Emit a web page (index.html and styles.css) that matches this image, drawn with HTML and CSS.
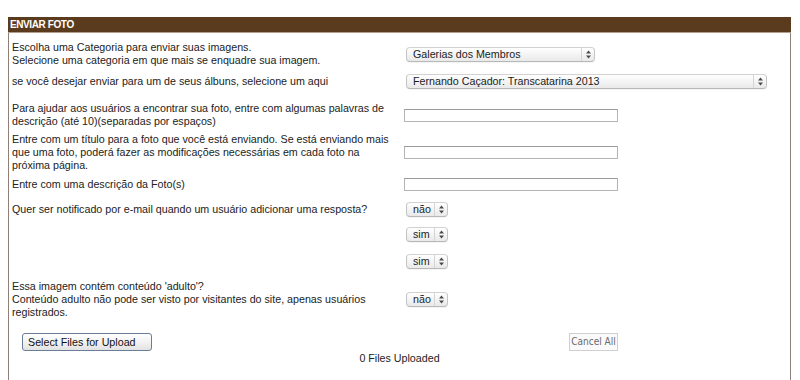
FILE: index.html
```html
<!DOCTYPE html>
<html lang="pt-BR">
<head>
<meta charset="utf-8">
<title>Enviar Foto</title>
<link rel="stylesheet" href="styles.css">
</head>
<body>
<div class="panel">
  <div class="panel-title">ENVIAR FOTO</div>
  <div class="form">
    <div class="row pt8">
      <div class="label">Escolha uma Categoria para enviar suas imagens.<br>Selecione uma categoria em que mais se enquadre sua imagem.</div>
      <div class="field">
        <span class="select select-cat"><span class="select-text">Galerias dos Membros</span><span class="select-arrows"><svg width="5" height="9" viewBox="0 0 5 9"><path d="M0 3.6 L2.5 0.6 L5 3.6 Z M0 5.4 L2.5 8.4 L5 5.4 Z" fill="#4a4a4a"/></svg></span></span>
      </div>
    </div>
    <div class="row pt7">
      <div class="label">se você desejar enviar para um de seus álbuns, selecione um aqui</div>
      <div class="field">
        <span class="select select-album"><span class="select-text">Fernando Caçador: Transcatarina 2013</span><span class="select-arrows"><svg width="5" height="9" viewBox="0 0 5 9"><path d="M0 3.6 L2.5 0.6 L5 3.6 Z M0 5.4 L2.5 8.4 L5 5.4 Z" fill="#4a4a4a"/></svg></span></span>
      </div>
    </div>
    <div class="row pt13">
      <div class="label">Para ajudar aos usuários a encontrar sua foto, entre com algumas palavras de descrição (até 10)(separadas por espaços)</div>
      <div class="field"><span class="text-input"></span></div>
    </div>
    <div class="row pt5">
      <div class="label">Entre com um título para a foto que você está enviando. Se está enviando mais que uma foto, poderá fazer as modificações necessárias em cada foto na próxima página.</div>
      <div class="field"><span class="text-input"></span></div>
    </div>
    <div class="row pt6">
      <div class="label">Entre com uma descrição da Foto(s)</div>
      <div class="field"><span class="text-input"></span></div>
    </div>
    <div class="row pt11">
      <div class="label">Quer ser notificado por e-mail quando um usuário adicionar uma resposta?</div>
      <div class="field">
        <span class="select select-yn"><span class="select-text">não</span><span class="select-arrows"><svg width="5" height="9" viewBox="0 0 5 9"><path d="M0 3.6 L2.5 0.6 L5 3.6 Z M0 5.4 L2.5 8.4 L5 5.4 Z" fill="#4a4a4a"/></svg></span></span>
      </div>
    </div>
    <div class="row pt10">
      <div class="label"></div>
      <div class="field">
        <span class="select select-yn"><span class="select-text">sim</span><span class="select-arrows"><svg width="5" height="9" viewBox="0 0 5 9"><path d="M0 3.6 L2.5 0.6 L5 3.6 Z M0 5.4 L2.5 8.4 L5 5.4 Z" fill="#4a4a4a"/></svg></span></span>
      </div>
    </div>
    <div class="row pt12">
      <div class="label"></div>
      <div class="field">
        <span class="select select-yn"><span class="select-text">sim</span><span class="select-arrows"><svg width="5" height="9" viewBox="0 0 5 9"><path d="M0 3.6 L2.5 0.6 L5 3.6 Z M0 5.4 L2.5 8.4 L5 5.4 Z" fill="#4a4a4a"/></svg></span></span>
      </div>
    </div>
    <div class="row pt11">
      <div class="label">Essa imagem contém conteúdo 'adulto'?<br>Conteúdo adulto não pode ser visto por visitantes do site, apenas usuários registrados.</div>
      <div class="field">
        <span class="select select-yn"><span class="select-text">não</span><span class="select-arrows"><svg width="5" height="9" viewBox="0 0 5 9"><path d="M0 3.6 L2.5 0.6 L5 3.6 Z M0 5.4 L2.5 8.4 L5 5.4 Z" fill="#4a4a4a"/></svg></span></span>
      </div>
    </div>
  </div>
  <div class="upload-bar">
    <button class="btn-select" type="button">Select Files for Upload</button>
    <button class="btn-cancel" type="button">Cancel All</button>
  </div>
  <div class="upload-status">0 Files Uploaded</div>
</div>
</body>
</html>
```

FILE: styles.css
```css
html, body {
  margin: 0;
  padding: 0;
  background: #ffffff;
}

body {
  font-family: "Liberation Sans", Arial, Helvetica, sans-serif;
  font-size: 10.7px;
  line-height: 13px;
  color: #222222;
}

.panel {
  margin: 17px 9px 0 8px;
  min-height: 363px;
  box-sizing: border-box;
  border-left: 1px solid #8d8078;
  border-right: 1px solid #8d8078;
}

.panel-title {
  height: 15px;
  background: #5b3b1d;
  border-bottom: 1px solid #b3a08c;
  margin: 0 -1px;
  padding-left: 2px;
  color: #ffffff;
  font-family: "Liberation Sans Narrow", "Liberation Sans", Arial, sans-serif;
  font-stretch: condensed;
  font-weight: bold;
  font-size: 10px;
  line-height: 16px;
  letter-spacing: -0.4px;
}

.form {
  padding-left: 3px;
}

.row {
  display: flex;
  align-items: center;
}

.pt5 { padding-top: 5px; }
.pt6 { padding-top: 6px; }
.pt7 { padding-top: 7px; }
.pt8 { padding-top: 8px; }
.pt10 { padding-top: 10px; }
.pt11 { padding-top: 11px; }
.pt12 { padding-top: 12px; }
.pt13 { padding-top: 13px; }

.label {
  width: 386px;
  flex: none;
  margin-right: 6px;
}

.field {
  flex: 1;
  display: flex;
  align-items: center;
}

.select {
  margin-left: 2px;
  height: 15px;
  box-sizing: border-box;
  display: flex;
  align-items: stretch;
  border: 1px solid #c4c4c4;
  border-top-color: #d2d2d2;
  border-bottom-color: #b8b8b8;
  border-radius: 4px;
  background: linear-gradient(#ffffff, #f4f4f4 50%, #e9e9e9);
  box-shadow: 0 1px 0 rgba(0, 0, 0, 0.04);
  color: #1c1c1c;
  line-height: 13px;
}

.select-text {
  flex: 1;
  padding-left: 6px;
  white-space: nowrap;
  overflow: hidden;
}

.select-arrows {
  width: 12px;
  flex: none;
  border-left: 1px solid #d4d4d4;
  display: flex;
  align-items: center;
  justify-content: center;
}

.select-cat { width: 189px; }
.select-album { width: 361px; }
.select-yn { width: 42px; }

.text-input {
  display: block;
  width: 214px;
  height: 13px;
  box-sizing: border-box;
  border: 1px solid #b4b4b4;
  border-top-color: #9a9a9a;
  background: #ffffff;
}

.upload-bar {
  width: 609px;
  box-sizing: border-box;
  padding: 14px 0 0 13px;
  display: flex;
  justify-content: space-between;
  align-items: flex-start;
}

.btn-select {
  width: 130px;
  height: 18px;
  margin: 0;
  padding: 0 5px;
  text-align: left;
  border: 1px solid #6a7e98;
  border-radius: 3px;
  background: linear-gradient(#ffffff, #f1f1f1 55%, #e2e2e2);
  font-family: "Liberation Sans", Arial, sans-serif;
  font-size: 10.7px;
  line-height: 16px;
  color: #111111;
}

.btn-cancel {
  width: 49px;
  height: 18px;
  margin: 0;
  padding: 0;
  border: 1px solid #d0d0d0;
  border-radius: 0;
  background: #fafafa;
  font-family: "DejaVu Sans Condensed", "DejaVu Sans", sans-serif;
  font-stretch: condensed;
  font-size: 10px;
  line-height: 16px;
  color: #6a6a6a;
}

.upload-status {
  margin-top: 1px;
  text-align: center;
}
```
